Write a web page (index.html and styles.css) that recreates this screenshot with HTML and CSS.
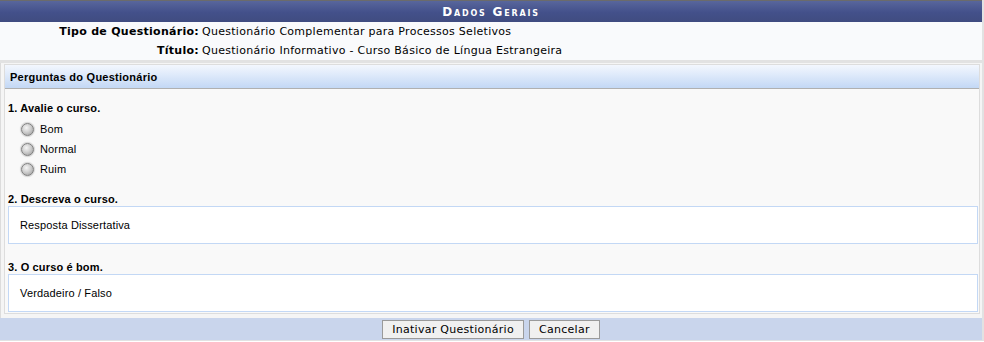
FILE: index.html
```html
<!DOCTYPE html>
<html lang="pt-BR">
<head>
<meta charset="utf-8">
<title>Dados Gerais</title>
<link rel="stylesheet" href="styles.css">
</head>
<body>
<div class="form">
  <div class="caption">Dados Gerais</div>
  <div class="info">
    <div class="lbl">Tipo de Questionário:</div>
    <div class="val">Questionário Complementar para Processos Seletivos</div>
    <div class="lbl">Título:</div>
    <div class="val">Questionário Informativo - Curso Básico de Língua Estrangeira</div>
  </div>
  <div class="body">
    <div class="panel">
      <div class="panel-head">Perguntas do Questionário</div>
      <div class="panel-body">
        <div class="q">1. Avalie o curso.</div>
        <ul class="opts">
          <li><span class="radio"></span>Bom</li>
          <li><span class="radio"></span>Normal</li>
          <li><span class="radio"></span>Ruim</li>
        </ul>
        <div class="q">2. Descreva o curso.</div>
        <div class="answer">Resposta Dissertativa</div>
        <div class="q q3">3. O curso é bom.</div>
        <div class="answer">Verdadeiro / Falso</div>
      </div>
    </div>
  </div>
  <div class="foot">
    <button class="btn">Inativar Questionário</button>
    <button class="btn">Cancelar</button>
  </div>
</div>
</body>
</html>
```

FILE: styles.css
```css
html, body {
  margin: 0;
  padding: 0;
  background: #ffffff;
}

.form {
  width: 982px;
  border-right: 2px solid #e2e2e2;
  font-family: "DejaVu Sans", Verdana, sans-serif;
  font-size: 11px;
  color: #000;
}

.caption {
  height: 21px;
  border-top: 1px solid #6b6b6b;
  background: linear-gradient(#58669c, #43508a 55%, #404c80);
  color: #ffffff;
  font-weight: bold;
  font-variant: small-caps;
  letter-spacing: 1.8px;
  font-size: 12px;
  line-height: 22px;
  text-align: center;
}

.info {
  display: grid;
  grid-template-columns: 199px 1fr;
  column-gap: 3px;
  background: #f9fafc;
  border-bottom: 3px solid #e2e2e2;
  letter-spacing: 0.28px;
}

.info > div {
  height: 19px;
  line-height: 19px;
}

.lbl {
  text-align: right;
  font-weight: bold;
}

.body {
  background: #f5f5f5;
  border-left: 1px solid #dcdcdc;
  padding: 1px 2px 4px 3px;
}

.panel {
  border: 1px solid #dddddd;
  background: #f9f9f9;
  font-family: "Liberation Sans", Arial, sans-serif;
  letter-spacing: 0.15px;
}

.panel-head {
  height: 23px;
  line-height: 24px;
  padding-left: 5px;
  background: linear-gradient(#f3f7fe, #c3d8f5);
  border-bottom: 1px solid #b0b0b0;
  font-weight: bold;
  font-size: 11px;
  letter-spacing: 0.25px;
}

.panel-body {
  padding: 12px 1px 1px 3px;
}

.q {
  font-weight: bold;
  font-size: 11px;
  height: 14px;
  line-height: 14px;
}

.opts {
  list-style: none;
  margin: 0 0 13px 0;
  padding: 4px 0 0 13px;
}

.opts li {
  display: flex;
  align-items: center;
  height: 20px;
  font-size: 11px;
}

.radio {
  width: 11px;
  height: 11px;
  border: 1px solid #7e7e7e;
  border-radius: 50%;
  background: radial-gradient(circle at 40% 35%, #f6f6f6 0%, #cfcfcf 45%, #959595 100%);
  box-shadow: 0 0 1px 1px #d4d4d4;
  margin-right: 6px;
}

.answer {
  height: 36px;
  line-height: 36px;
  border: 1px solid #c3d8f5;
  background: #ffffff;
  padding-left: 11px;
  font-size: 11px;
}

.q3 {
  margin-top: 16px;
}

.foot {
  height: 22px;
  background: #c9d5ec;
  display: flex;
  justify-content: center;
  align-items: center;
  gap: 5px;
  border-bottom: 1px solid #e2e2e2;
}

.btn {
  height: 19px;
  padding: 0 9px;
  font-family: "DejaVu Sans", Verdana, sans-serif;
  font-size: 11px;
  letter-spacing: 0.28px;
  color: #000;
  background: #f0f0f0;
  border: 1px solid #9a9a9a;
  border-radius: 0;
  line-height: 17px;
}
```
